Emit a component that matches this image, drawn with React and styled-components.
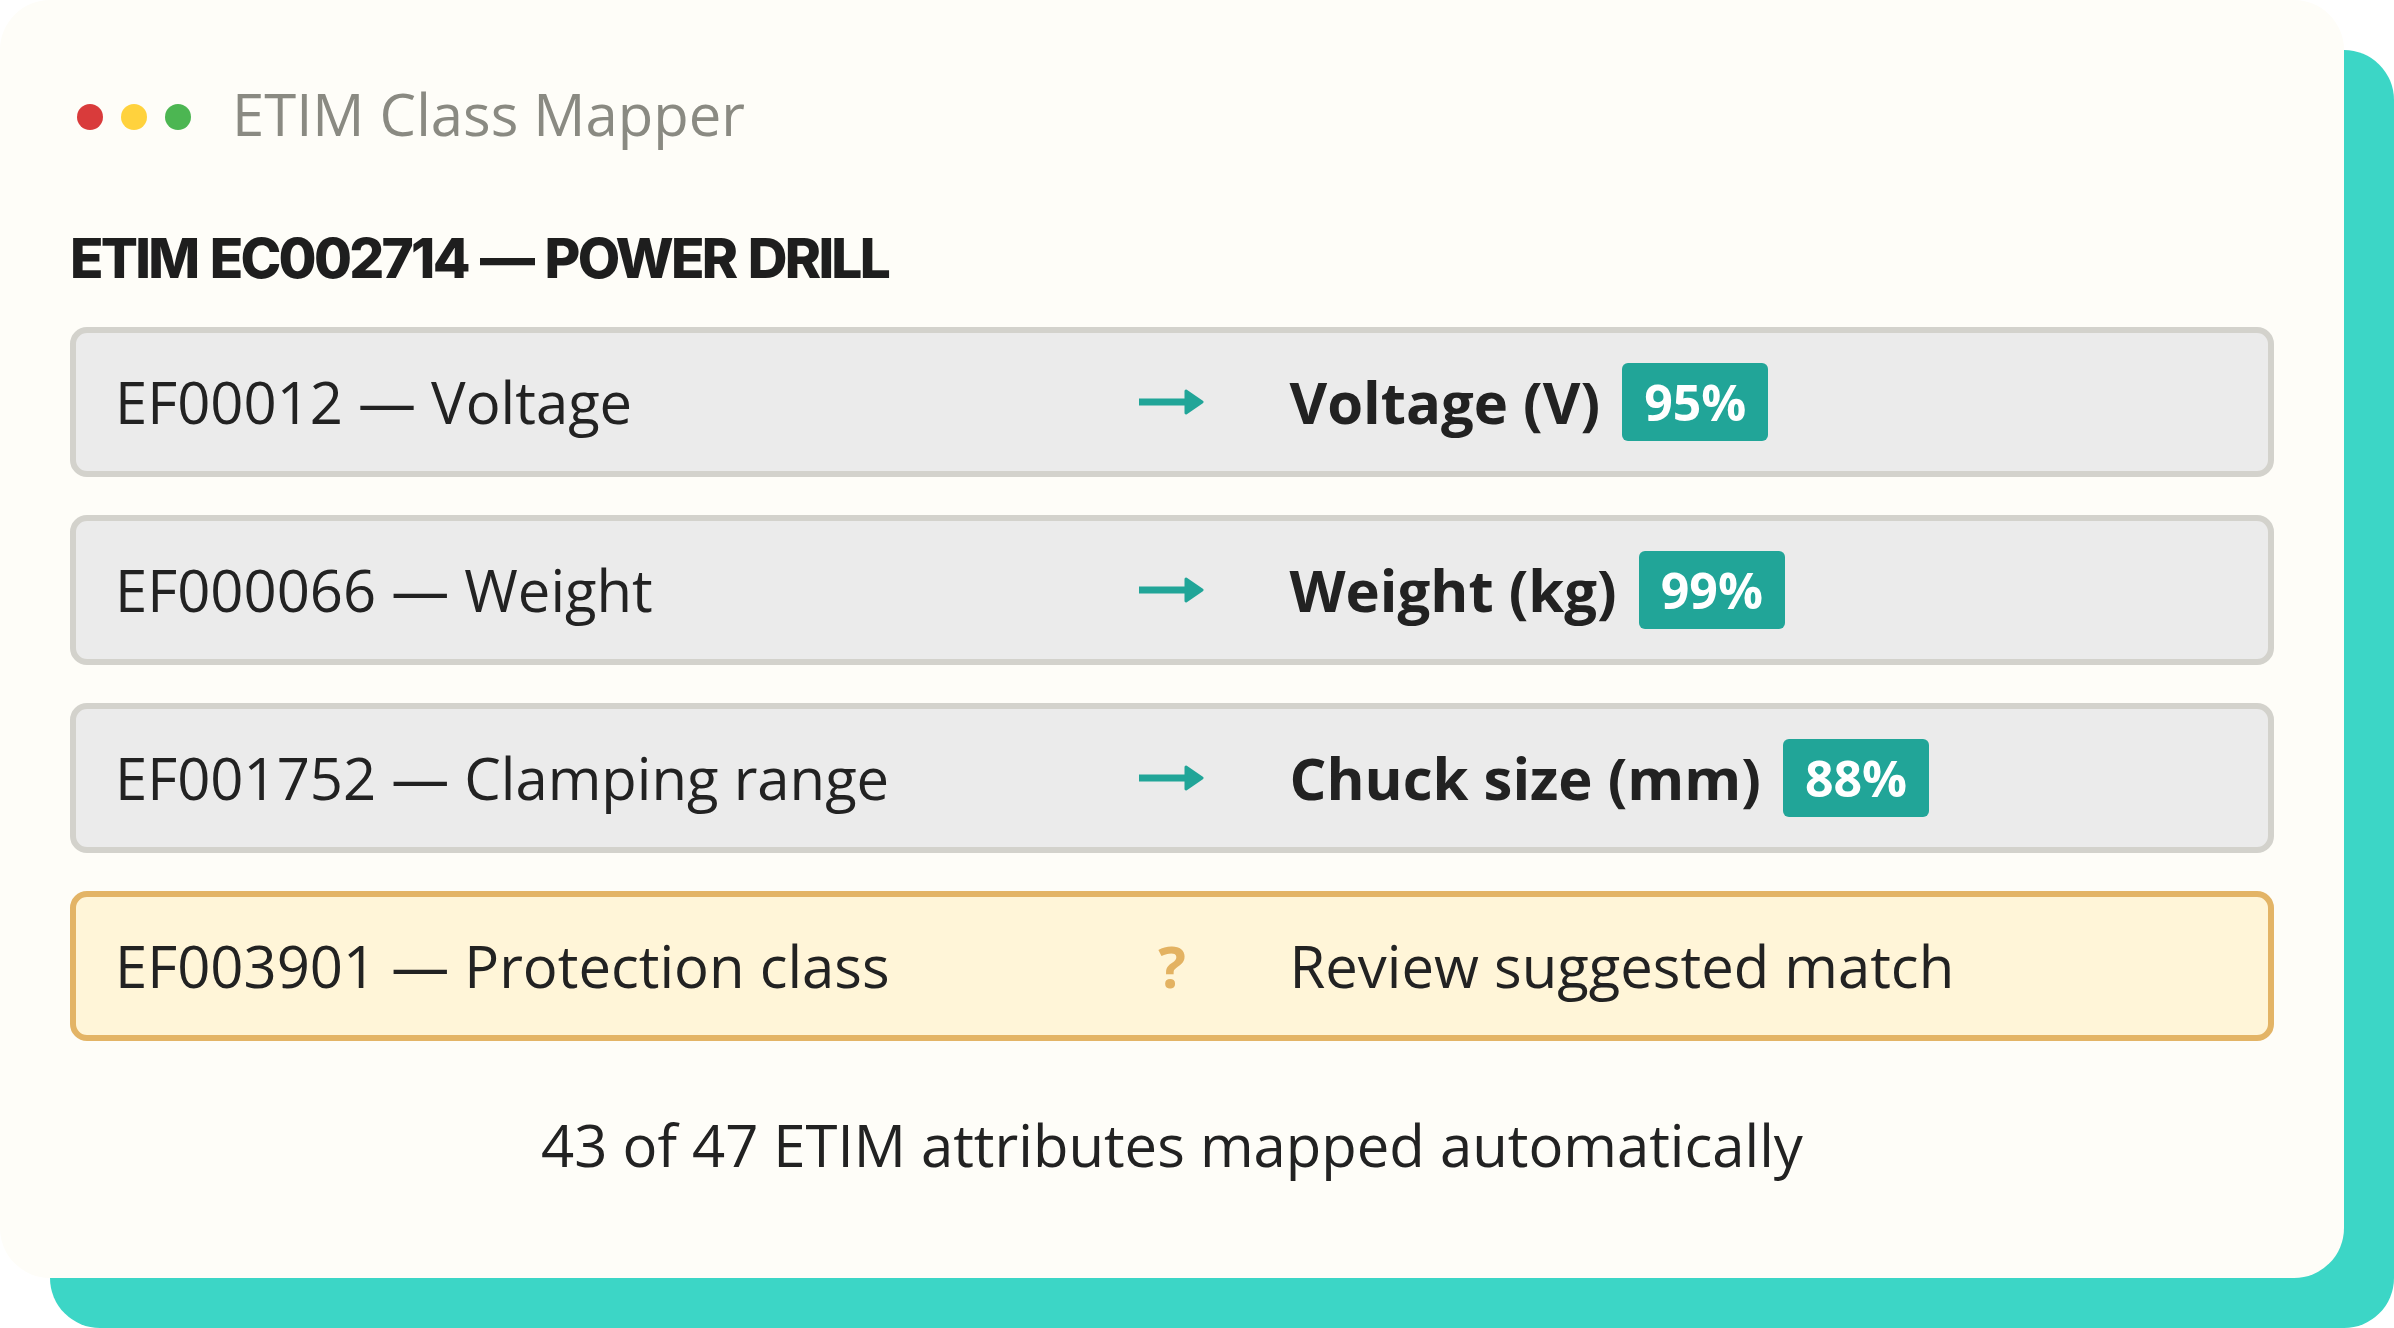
import React from "react";
import styled, { createGlobalStyle } from "styled-components";

const GlobalStyle = createGlobalStyle`
  html, body {
    margin: 0;
    padding: 0;
    background: #ffffff;
  }
  * {
    box-sizing: border-box;
  }
`;

const Page = styled.div`
  width: 2394px;
  height: 1328px;
  overflow: hidden;
`;

const Card = styled.div`
  width: 2344px;
  height: 1278px;
  background: #fefdf8;
  border-radius: 50px;
  box-shadow: 50px 50px 0 0 #3cd6c6;
  padding: 84px 70px 0 70px;
  display: flex;
  flex-direction: column;
  font-family: "Open Sans", "Noto Sans", sans-serif;
  color: #222222;
`;

const Header = styled.div`
  display: flex;
  align-items: center;
  height: 59px;
  padding-left: 7px;
`;

const Dots = styled.div`
  display: flex;
  gap: 18px;
  margin-right: 41px;
  margin-top: 6px;
`;

const Dot = styled.span`
  width: 26px;
  height: 26px;
  border-radius: 50%;
  background: ${(p) => p.color};
`;

const AppTitle = styled.div`
  font-size: 58px;
  line-height: 59px;
  color: #8a8a82;
  white-space: nowrap;
`;

const ClassHeading = styled.h2`
  margin: 88px 0 0 0;
  padding-left: 0;
  font-family: "Inter", "Liberation Sans", sans-serif;
  font-weight: 800;
  font-size: 55px;
  line-height: 55px;
  letter-spacing: -0.05em;
  word-spacing: 3px;
  color: #1e1e1e;
  white-space: nowrap;
`;

const Rows = styled.div`
  display: flex;
  flex-direction: column;
  gap: 38px;
  margin-top: 41px;
`;

const Row = styled.div`
  height: 150px;
  border: 6px solid ${(p) => (p.review ? "#e3b466" : "#d3d2cc")};
  background: ${(p) => (p.review ? "#fff5d8" : "#ebebeb")};
  border-radius: 17px;
  padding: 0 39px;
  display: grid;
  grid-template-columns: 1fr 235px 1fr;
  align-items: center;
`;

const Source = styled.div`
  font-size: 58px;
  line-height: 60px;
  white-space: nowrap;
`;

const Mid = styled.div`
  display: flex;
  justify-content: center;
  align-items: center;
`;

const Question = styled.span`
  font-size: 58px;
  line-height: 60px;
  font-weight: 700;
  color: #e3b262;
`;

const Target = styled.div`
  display: flex;
  align-items: center;
  gap: 22px;
  white-space: nowrap;
`;

const TargetLabel = styled.span`
  font-size: 58px;
  line-height: 60px;
  font-weight: ${(p) => (p.plain ? 400 : 700)};
`;

const Badge = styled.span`
  height: 78px;
  line-height: 78px;
  padding: 0 22px;
  border-radius: 6px;
  background: #21a598;
  color: #ffffff;
  font-size: 50px;
  font-weight: 700;
`;

const Footer = styled.div`
  margin-top: 74px;
  text-align: center;
  font-size: 58px;
  line-height: 60px;
  color: #222222;
`;

const Arrow = () => (
  <svg width="66" height="26" viewBox="0 0 66 26">
    <rect x="0" y="9.5" width="50" height="7" fill="#21a598" />
    <path
      d="M47 2 L63 13 L47 24 Z"
      fill="#21a598"
      stroke="#21a598"
      strokeWidth="3"
      strokeLinejoin="round"
    />
  </svg>
);

const mappings = [
  { source: "EF00012 — Voltage", target: "Voltage (V)", score: "95%" },
  { source: "EF000066 — Weight", target: "Weight (kg)", score: "99%" },
  { source: "EF001752 — Clamping range", target: "Chuck size (mm)", score: "88%" },
];

const App = () => {
  return (
    <Page>
      <GlobalStyle />
      <Card>
        <Header>
          <Dots>
            <Dot color="#d93b3b" />
            <Dot color="#ffd23d" />
            <Dot color="#4cb652" />
          </Dots>
          <AppTitle>ETIM Class Mapper</AppTitle>
        </Header>

        <ClassHeading>ETIM EC002714 — POWER DRILL</ClassHeading>

        <Rows>
          {mappings.map((m) => (
            <Row key={m.source}>
              <Source>{m.source}</Source>
              <Mid>
                <Arrow />
              </Mid>
              <Target>
                <TargetLabel>{m.target}</TargetLabel>
                <Badge>{m.score}</Badge>
              </Target>
            </Row>
          ))}
          <Row review>
            <Source>EF003901 — Protection class</Source>
            <Mid>
              <Question>?</Question>
            </Mid>
            <Target>
              <TargetLabel plain>Review suggested match</TargetLabel>
            </Target>
          </Row>
        </Rows>

        <Footer>43 of 47 ETIM attributes mapped automatically</Footer>
      </Card>
    </Page>
  );
};

export default App;
